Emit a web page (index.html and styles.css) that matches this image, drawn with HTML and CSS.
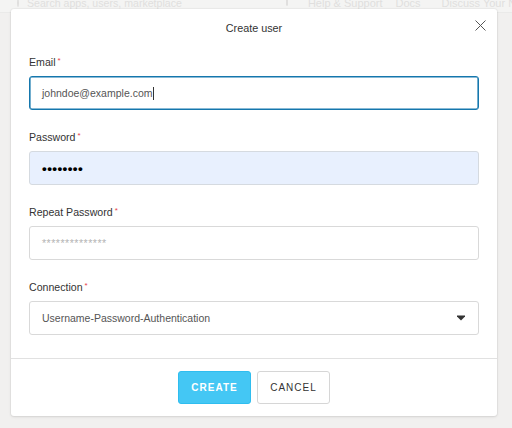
FILE: index.html
```html
<!DOCTYPE html>
<html lang="en">
<head>
<meta charset="utf-8">
<title>Create user</title>
<link rel="stylesheet" href="styles.css">
</head>
<body>
<div class="page">
  <div class="topbar">
    <span class="search-icon"></span>
    <span class="search-text">Search apps, users, marketplace</span>
    <span class="lock-icon"></span>
    <span class="badge"></span>
    <span class="nav">Help &amp; Support</span>
    <span class="nav">Docs</span>
    <span class="nav-sep"></span>
    <span class="nav">Discuss Your Needs</span>
  </div>
</div>
<div class="backdrop">
  <div class="modal">
    <div class="modal-header">
      <h1 class="title">Create user</h1>
      <button class="close" aria-label="Close">
        <svg width="11" height="11" viewBox="0 0 11 11"><path d="M0.5 0.5 L10.5 10.5 M10.5 0.5 L0.5 10.5" stroke="#555" stroke-width="1" fill="none"/></svg>
      </button>
    </div>
    <div class="modal-body">
      <div class="field">
        <label class="label">Email<span class="req">*</span></label>
        <div class="input focused"><span class="value">johndoe@example.com</span><span class="caret"></span></div>
      </div>
      <div class="field">
        <label class="label">Password<span class="req">*</span></label>
        <div class="input autofill"><span class="dots">&#8226;&#8226;&#8226;&#8226;&#8226;&#8226;&#8226;&#8226;</span></div>
      </div>
      <div class="field">
        <label class="label">Repeat Password<span class="req">*</span></label>
        <div class="input"><span class="placeholder">**************</span></div>
      </div>
      <div class="field">
        <label class="label">Connection<span class="req">*</span></label>
        <div class="input select"><span class="value">Username-Password-Authentication</span>
          <svg class="arrow" width="8" height="6" viewBox="0 0 8 6"><path d="M0 0.5 H8 V1.5 L4 5.5 L0 1.5 Z" fill="#333"/></svg>
        </div>
      </div>
    </div>
    <div class="modal-footer">
      <button class="btn primary">CREATE</button>
      <button class="btn secondary">CANCEL</button>
    </div>
  </div>
</div>
</body>
</html>
```
FILE: styles.css
```css
* { box-sizing: border-box; }
html, body { margin: 0; padding: 0; }
body {
  width: 512px;
  height: 428px;
  overflow: hidden;
  position: relative;
  font-family: "Liberation Sans", Arial, sans-serif;
  background: #f1f0ef;
}
.page {
  height: 428px;
  background: #f1f0ef;
}
.topbar {
  display: flex;
  align-items: center;
  height: 20px;
  margin-top: -7px;
  padding-left: 17px;
  background: #f4f4f3;
  border-bottom: 1px solid #eaeae9;
  color: #e0dfde;
  font-size: 11px;
  white-space: nowrap;
}
.search-icon {
  width: 8px; height: 8px;
  border: 1.5px solid #e0dfde;
  border-radius: 50%;
  margin-right: 8px;
}
.search-text { font-size: 10.6px; margin-right: 82px; }
.lock-icon {
  width: 6px; height: 7px;
  border: 1.5px solid #e0dfde;
  border-radius: 2px;
  margin-right: 7px;
}
.badge {
  width: 15px; height: 15px;
  border-radius: 50%;
  background: #e5eaef;
  margin-right: 13px;
}
.nav { margin-right: 13px; font-size: 11px; }
.nav-sep {
  width: 1px; height: 12px;
  background: #e0dfde;
  margin-right: 8px;
  margin-left: 0;
}
.backdrop {
  position: absolute;
  inset: 0;
  padding: 9px 15px 0 11px;
}
.modal {
  width: 486px;
  background: #fff;
  border-radius: 3px;
  box-shadow: 0 1px 3px rgba(0,0,0,0.10), 0 0 0 1px rgba(0,0,0,0.03);
}
.modal-header {
  position: relative;
  height: 38px;
  display: flex;
  align-items: center;
  justify-content: center;
}
.title {
  margin: 0;
  font-size: 10.8px;
  font-weight: normal;
  color: #333;
  line-height: 16px;
}
.close {
  position: absolute;
  right: 11px;
  top: 11px;
  width: 11px;
  height: 11px;
  padding: 0;
  border: 0;
  background: none;
  display: flex;
}
.modal-body {
  padding: 7px 18px 23px;
  display: flex;
  flex-direction: column;
  gap: 19px;
}
.field { display: flex; flex-direction: column; }
.label {
  font-size: 10.6px;
  line-height: 16px;
  color: #333;
  margin-bottom: 6px;
  display: flex;
  align-items: flex-start;
}
.req {
  color: #e8424b;
  font-size: 8px;
  line-height: 10px;
  margin-left: 2px;
  margin-top: 2px;
}
.input {
  height: 34px;
  border: 1px solid #d9d9d9;
  border-radius: 3px;
  padding: 0 12px;
  display: flex;
  align-items: center;
  font-size: 10.5px;
  color: #555;
  background: #fff;
}
.input.focused {
  border-color: #1577ad;
  box-shadow: inset 0 0 0 0.6px #1577ad;
}
.caret {
  width: 1px;
  height: 13px;
  background: #333;
  margin-left: 1px;
}
.input.autofill {
  background: #e8f0fe;
  border-color: #d5dae0;
}
.dots {
  color: #000;
  font-size: 13.5px;
  letter-spacing: 0.4px;
  font-weight: bold;
}
.placeholder {
  color: #b4b4b4;
  font-size: 10.6px;
  letter-spacing: 0.5px;
}
.select { justify-content: space-between; }
.arrow { margin-right: 1px; }
.modal-footer {
  border-top: 1px solid #e1e1e1;
  padding: 12px 0;
  display: flex;
  justify-content: center;
  gap: 6px;
}
.btn {
  width: 73px;
  height: 33px;
  border-radius: 3px;
  font-family: "Liberation Sans", Arial, sans-serif;
  font-size: 10px;
  letter-spacing: 1px;
  padding: 0;
}
.primary {
  background: #44c7f4;
  border: 1px solid #2fbdef;
  color: #fff;
  font-weight: bold;
}
.secondary {
  background: #fff;
  border: 1px solid #d6d6d6;
  color: #333;
}
.search-text { margin-right: 104px; }
```
